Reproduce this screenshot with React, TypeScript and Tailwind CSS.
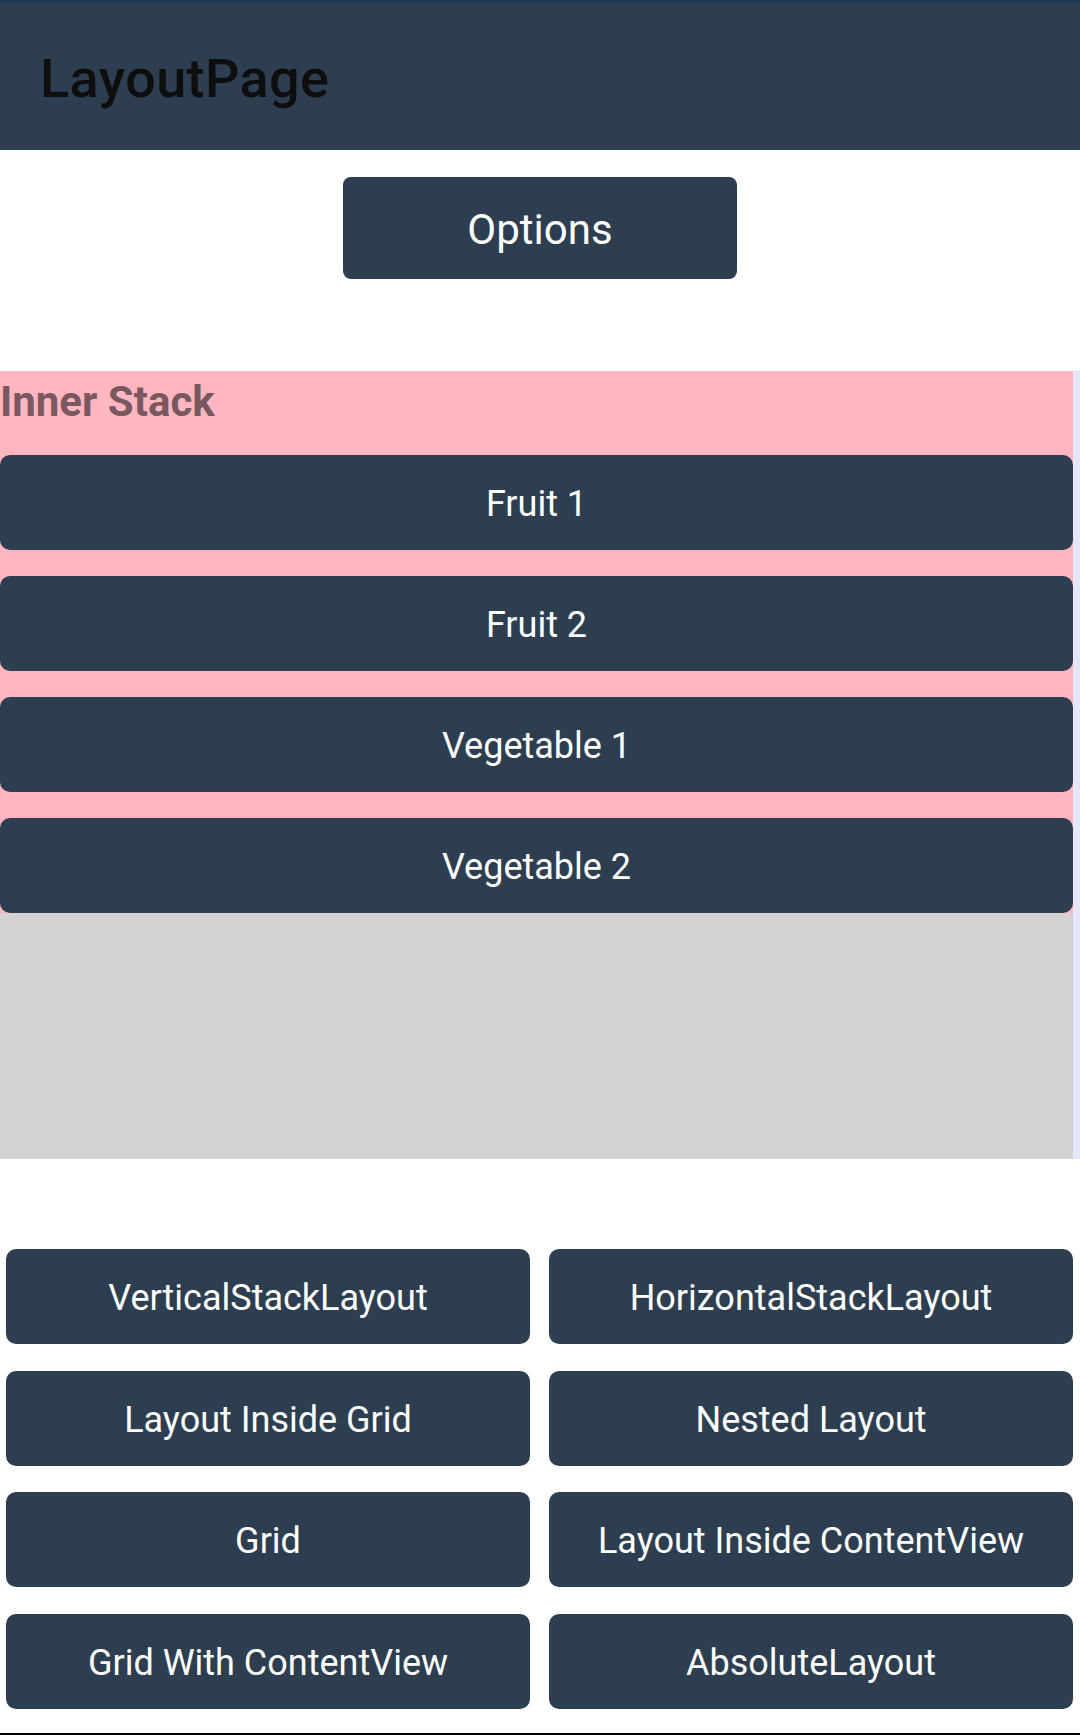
import React from "react";

const Btn = ({ label, className = "" }: { label: string; className?: string }) => (
  <div
    className={`flex items-center justify-center bg-[#2d3e50] text-white leading-none pt-[3px] ${className}`}
  >
    {label}
  </div>
);

export default function App() {
  const grid = [
    "VerticalStackLayout",
    "HorizontalStackLayout",
    "Layout Inside Grid",
    "Nested Layout",
    "Grid",
    "Layout Inside ContentView",
    "Grid With ContentView",
    "AbsoluteLayout",
  ];
  return (
    <div className="w-[1080px] h-[1735px] bg-white flex flex-col font-['Roboto',sans-serif] overflow-hidden">
      <div className="h-[150px] shrink-0 bg-[#2d3e50] border-t-[3px] border-[#1f3650] pl-[40px] pt-[45px]">
        <div className="text-[54px] leading-[62px] font-medium tracking-[0.4px] text-[#0e0e0e]">LayoutPage</div>
      </div>
      <div className="flex justify-center pt-[27px]">
        <Btn label="Options" className="w-[394px] h-[102px] rounded-[8px] text-[42px]" />
      </div>
      <div className="mt-[92px] h-[788px] shrink-0 bg-[#e6e6fa] pr-[7px] flex">
        <div className="flex-1 bg-[#d3d3d3] flex flex-col">
          <div className="bg-[#ffb6c1] flex flex-col gap-[26px]">
            <div className="h-[58px] pt-[6px] text-[42px] leading-[49px] font-bold text-[#79585f]">
              Inner Stack
            </div>
            <Btn label="Fruit 1" className="h-[95px] rounded-[10px] text-[36px]" />
            <Btn label="Fruit 2" className="h-[95px] rounded-[10px] text-[36px]" />
            <Btn label="Vegetable 1" className="h-[95px] rounded-[10px] text-[36px]" />
            <Btn label="Vegetable 2" className="h-[95px] rounded-[10px] text-[36px]" />
          </div>
        </div>
      </div>
      <div className="mt-[90px] pl-[6px] pr-[7px] grid grid-cols-2 gap-x-[19px] gap-y-[26.5px]">
        {grid.map((g) => (
          <Btn key={g} label={g} className="h-[95px] rounded-[10px] text-[36px]" />
        ))}
      </div>
      <div className="mt-[24px] h-[2px] bg-black shrink-0" />
    </div>
  );
}
